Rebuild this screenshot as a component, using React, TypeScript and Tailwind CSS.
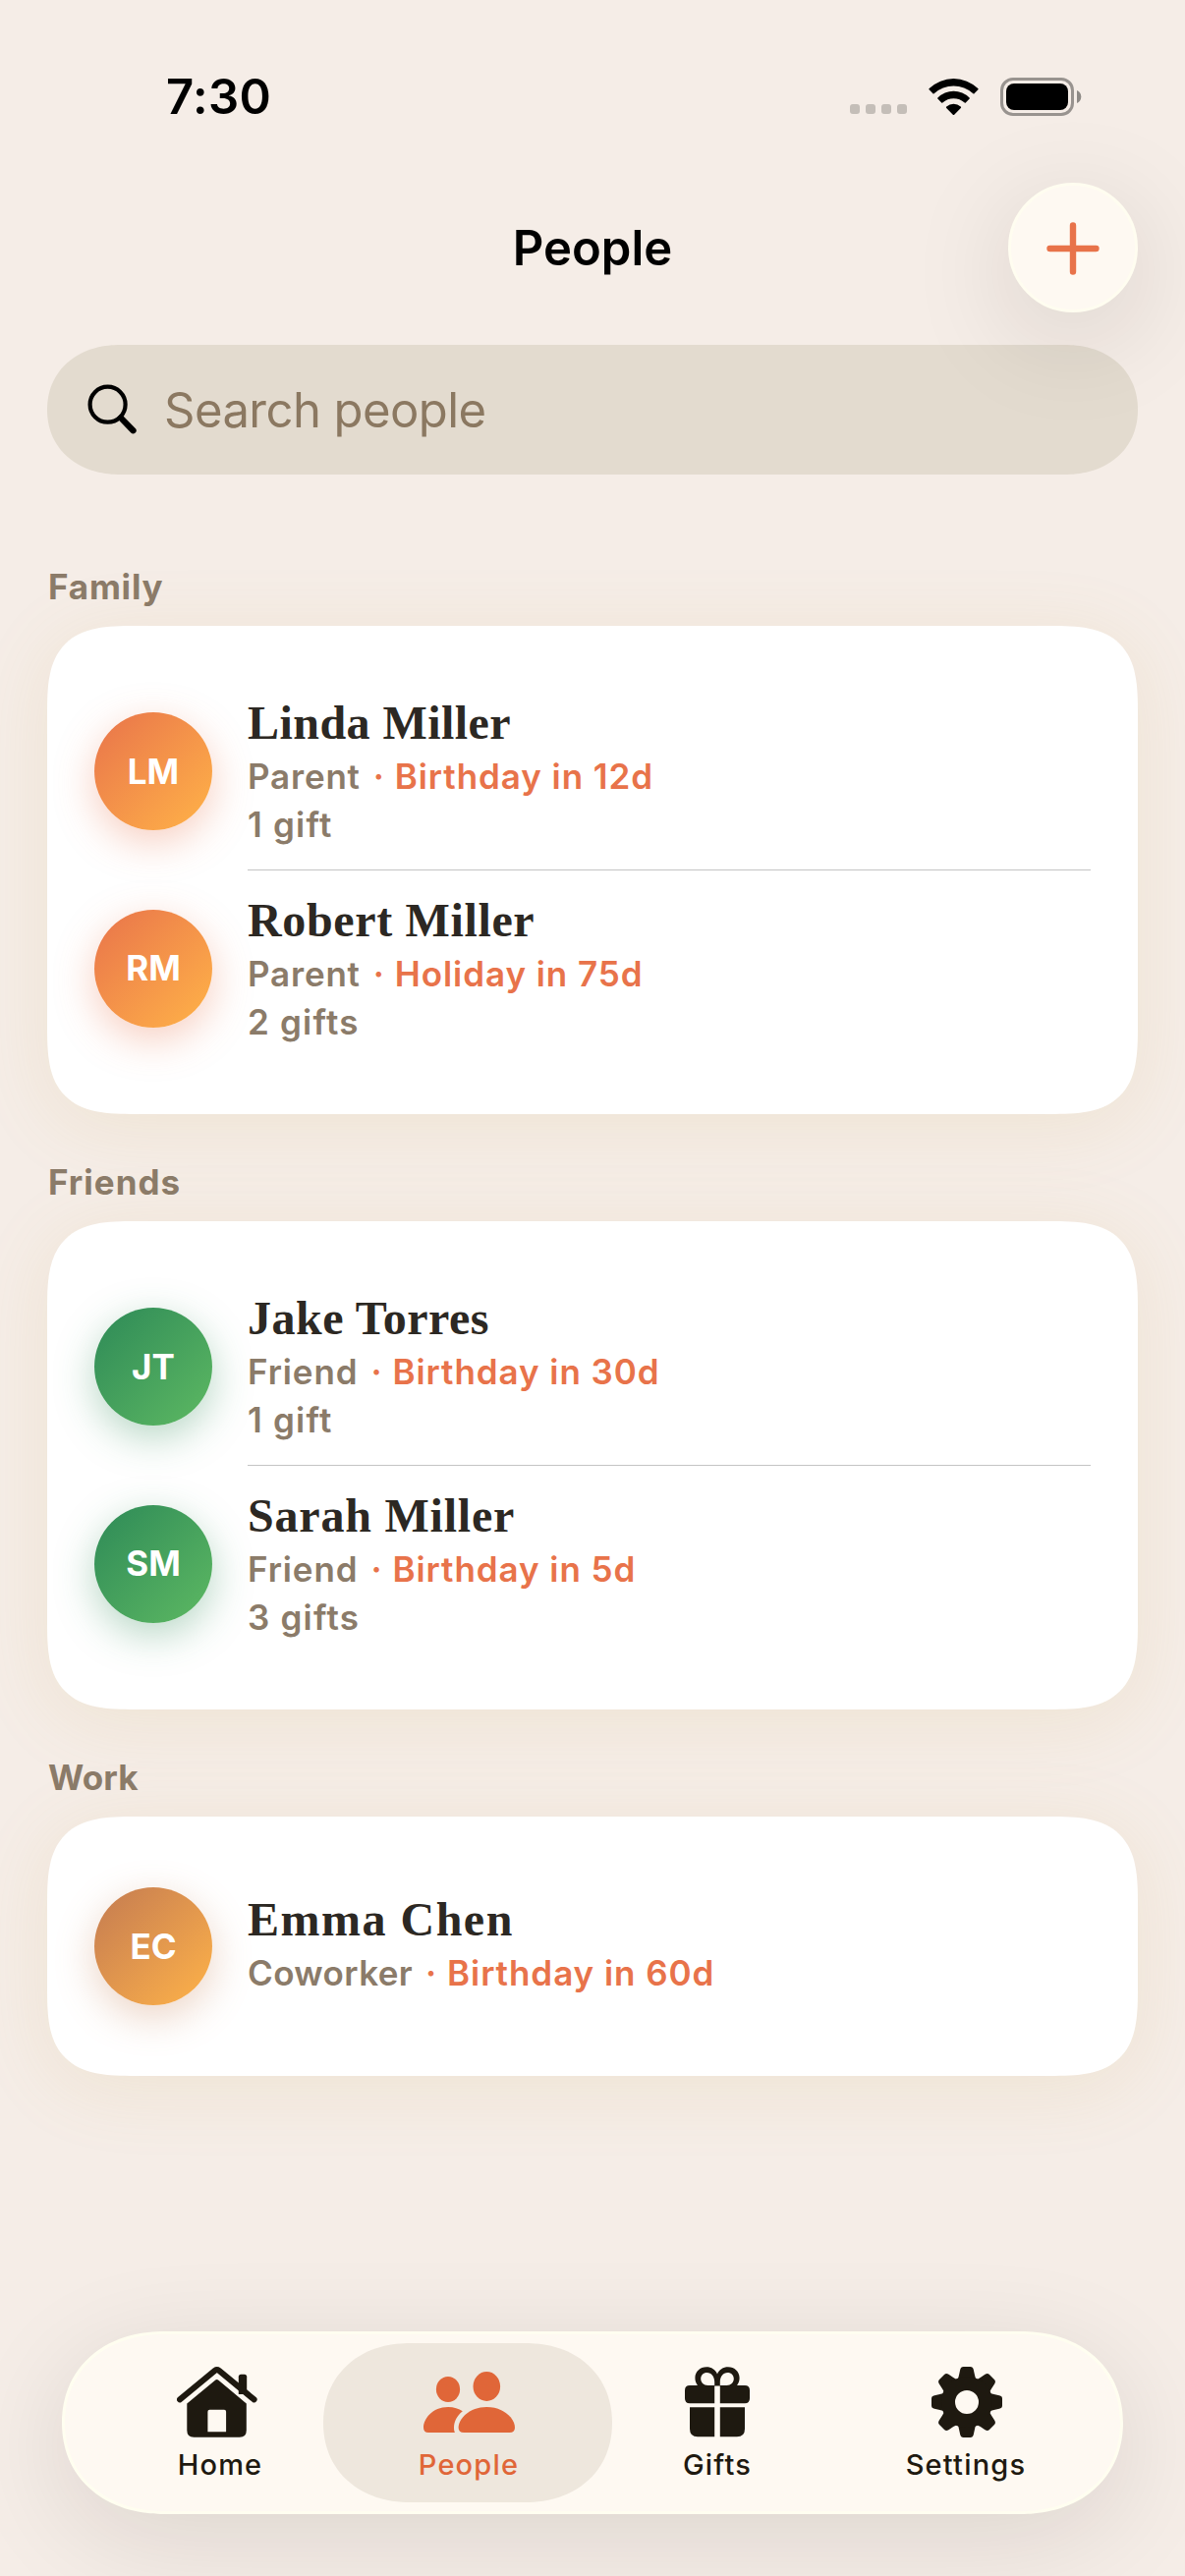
import type { ReactNode } from "react";

type Person = {
  initials: string;
  name: string;
  nameTracking: string;
  relation: string;
  relationTracking: string;
  event: string;
  gifts?: string;
};

type Group = {
  label: string;
  labelTracking: string;
  avatar: string;
  people: Person[];
};

const groups: Group[] = [
  {
    label: "Family",
    labelTracking: "tracking-[0.8px]",
    avatar: "from-[#E8734A] to-[#FFB347] shadow-[0_12px_40px_rgba(232,115,74,0.35)]",
    people: [
      {
        initials: "LM",
        name: "Linda Miller",
        nameTracking: "tracking-[0.45px]",
        relation: "Parent",
        relationTracking: "tracking-[0.8px]",
        event: "Birthday in 12d",
        gifts: "1 gift",
      },
      {
        initials: "RM",
        name: "Robert Miller",
        nameTracking: "tracking-[0.65px]",
        relation: "Parent",
        relationTracking: "tracking-[0.8px]",
        event: "Holiday in 75d",
        gifts: "2 gifts",
      },
    ],
  },
  {
    label: "Friends",
    labelTracking: "tracking-[1px]",
    avatar: "from-[#2D8A57] to-[#5DB962] shadow-[0_12px_40px_rgba(45,138,87,0.35)]",
    people: [
      {
        initials: "JT",
        name: "Jake Torres",
        nameTracking: "tracking-[0.5px]",
        relation: "Friend",
        relationTracking: "tracking-[0.9px]",
        event: "Birthday in 30d",
        gifts: "1 gift",
      },
      {
        initials: "SM",
        name: "Sarah Miller",
        nameTracking: "tracking-[0.8px]",
        relation: "Friend",
        relationTracking: "tracking-[0.9px]",
        event: "Birthday in 5d",
        gifts: "3 gifts",
      },
    ],
  },
  {
    label: "Work",
    labelTracking: "tracking-[0.1px]",
    avatar: "from-[#C47B50] to-[#FFB347] shadow-[0_12px_40px_rgba(196,123,80,0.33)]",
    people: [
      {
        initials: "EC",
        name: "Emma Chen",
        nameTracking: "tracking-[1.5px]",
        relation: "Coworker",
        relationTracking: "tracking-[0.4px]",
        event: "Birthday in 60d",
      },
    ],
  },
];

function StatusBar() {
  return (
    <div className="flex h-[186px] shrink-0 items-start justify-between pt-[72px] pl-[169px] pr-[105px]">
      <span className="text-[49px] leading-[53px] font-semibold tracking-[0.4px]">7:30</span>
      <div className="flex h-[52px] items-center">
        <div className="mt-[26px] mr-[22px] flex gap-[6px]">
          <i className="size-[10px] rounded-[3px] bg-[#C4BEB8]" />
          <i className="size-[10px] rounded-[3px] bg-[#C4BEB8]" />
          <i className="size-[10px] rounded-[3px] bg-[#C4BEB8]" />
          <i className="size-[10px] rounded-[3px] bg-[#C4BEB8]" />
        </div>
        <svg className="mr-[22px]" width="51" height="37" viewBox="0 0 51 37">
          <path d="M0.600 11.300Q0.100 10.700 0.700 10.100A35.700 35.700 0 0 1 50.300 10.100Q50.900 10.700 50.400 11.300L46.500 15.300Q46 15.800 45.400 15.200A29.500 29.500 0 0 0 5.600 15.200Q5 15.800 4.500 15.300Z" />
          <path d="M9.300 20.500Q8.800 20 9.400 19.400A22.700 22.700 0 0 1 41.600 19.400Q42.200 20 41.700 20.500L37.800 24.600Q37.300 25 36.700 24.500A16.800 16.800 0 0 0 14.300 24.500Q13.700 25 13.200 24.600Z" />
          <path d="M18.200 30Q17.500 29.300 18.300 28.600A10.600 10.600 0 0 1 32.700 28.600Q33.500 29.300 32.800 30L26.200 36.700Q25.500 37.300 24.800 36.700Z" />
        </svg>
        <div className="flex h-[39px] w-[75px] rounded-[13px] border-[3px] border-[#98938F] p-[3px]">
          <div className="flex-1 rounded-[8px] bg-black" />
        </div>
        <svg className="ml-[3px]" width="5" height="13" viewBox="0 0 5 13" fill="#8E8A86">
          <path d="M0 0C2.600 1 4.300 3.400 4.300 6.500S2.600 12 0 13Z" />
        </svg>
      </div>
    </div>
  );
}

function Header() {
  return (
    <div className="flex h-[132px] shrink-0 items-center justify-between">
      <div className="w-[132px]" />
      <h1 className="mt-[2px] text-[49px] leading-[60px] font-semibold">People</h1>
      <button className="relative z-10 flex size-[132px] items-center justify-center rounded-full border-[3px] border-[#FFFDF0] bg-[#FEF9F2] pt-px shadow-[0_24px_108px_rgba(30,22,10,0.13)]">
        <svg width="54" height="54" viewBox="0 0 54 54" fill="none" stroke="#E8734A" strokeWidth="6.400" strokeLinecap="round">
          <path d="M27 3.500V50.500M3.500 27H50.500" />
        </svg>
      </button>
    </div>
  );
}

function SearchField() {
  return (
    <div className="mt-[33px] flex h-[132px] shrink-0 items-center rounded-[74px/66px] bg-[#E3DBCF] pl-[41px] [corner-shape:superellipse(1.1)]">
      <svg width="51" height="51" viewBox="0 0 51 51" fill="none" stroke="#000" className="-mt-[1px]">
        <circle cx="20.600" cy="20.700" r="18" strokeWidth="4.200" />
        <path d="M34 34.400L46.500 47.200" strokeWidth="6.300" strokeLinecap="round" />
      </svg>
      <span className="mt-[2px] ml-[27px] text-[49px] leading-[60px] tracking-[-0.55px] text-[#8B7861]">Search people</span>
    </div>
  );
}

function PersonRow({ person, avatar, divided }: { person: Person; avatar: string; divided: boolean }) {
  return (
    <div className="flex min-h-[168px] items-center gap-9">
      <div
        className={`flex size-[120px] shrink-0 items-center justify-center rounded-full bg-linear-135 text-[35px] font-bold text-white ${avatar}`}
      >
        {person.initials}
      </div>
      <div className={`flex-1 py-6 text-[35px] font-semibold ${divided ? "border-t border-[#C4C4C4]" : ""}`}>
        <div
          className={`font-['Liberation_Serif',serif] text-[48px] leading-[54px] font-bold text-[#2C2823] ${person.nameTracking}`}
        >
          {person.name}
        </div>
        <div className="flex gap-[13px] leading-[54px] text-[#8B7B69]">
          <span className={person.relationTracking}>{person.relation}</span>
          <span className="tracking-[0.95px] text-[#E8734A]">· {person.event}</span>
        </div>
        {person.gifts && <div className="leading-[44px] tracking-[1.2px] text-[#8B7B69]">{person.gifts}</div>}
      </div>
    </div>
  );
}

function GroupSection({ group }: { group: Group }) {
  return (
    <section className="flex flex-col gap-[19px]">
      <h2 className={`pl-px text-[35px] leading-[42px] font-bold text-[#8B7B69] ${group.labelTracking}`}>{group.label}</h2>
      <div className="rounded-[90px] bg-white p-12 shadow-[0_12px_76px_rgba(200,160,74,0.13)] [corner-shape:superellipse(1.6)]">
        {group.people.map((person, i) => (
          <PersonRow key={person.name} person={person} avatar={group.avatar} divided={i > 0} />
        ))}
      </div>
    </section>
  );
}

function HomeIcon() {
  return (
    <svg className="-ml-[5px]" width="82" height="72" viewBox="0 0 82 72" fill="#1E1910">
      <path d="M62.800 28V10.200Q62.800 7.700 65.300 7.700H68.700Q71.200 7.700 71.200 10.200V28Z" />
      <path d="M3 33.400L38.700 3.900Q40.800 2.300 42.900 3.900L78.600 33.400" fill="none" stroke="#1E1910" strokeWidth="6" strokeLinecap="round" />
      <path
        fillRule="evenodd"
        d="M39 13.700Q40.700 12.400 42.400 13.700L70.800 37.500V64.700Q70.800 71.700 63.800 71.700H17.300Q10.300 71.700 10.300 64.700V37.500ZM33.400 43.700Q31.400 43.700 31.400 45.700V66.300H50.100V45.700Q50.100 43.700 48.100 43.700Z"
      />
    </svg>
  );
}

function PeopleIcon() {
  return (
    <svg className="ml-[2px]" width="93" height="72" viewBox="0 -5 93 72" fill="#E06638">
      <ellipse cx="25" cy="18" rx="12.100" ry="13" />
      <ellipse cx="64.300" cy="15" rx="13.800" ry="15" />
      <path d="M35.600 57C35.600 48 46.500 36 64.300 36S93 48 93 57Q93 62 87.500 62H41.100Q35.600 62 35.600 57Z" />
      <path d="M0 57C0 48 9 36 25 36C31 36 36 37.600 39.800 40.300C34 45 31 51 31 57C31 59 31.300 60.500 31.900 62H5Q0 62 0 57Z" />
    </svg>
  );
}

function GiftIcon() {
  return (
    <svg className="ml-[1px]" width="66" height="72" viewBox="0 0 66 72" fill="#1E1910">
      <path
        fillRule="evenodd"
        d="M13.200 19.500C11.500 17 10.400 14.500 10.400 11.500C10.400 5 15.500 .3 22 .3C27 .3 31.200 3 33 7.500C34.800 3 39 .3 44 .3C50.500 .3 55.600 5 55.600 11.500C55.600 14.500 54.500 17 52.800 19.500ZM30.200 19H23.500C19 19 16.200 16 16.200 12.300C16.200 8.500 18.800 6 22.500 6C27 6 30.200 10 30.200 15.500ZM35.800 19H42.500C47 19 49.800 16 49.800 12.300C49.800 8.500 47.200 6 43.500 6C39 6 35.800 10 35.800 15.500Z"
      />
      <path d="M5 19H30.200V37.300H5Q0 37.300 0 32.300V24Q0 19 5 19ZM35.800 19H61Q66 19 66 24V32.300Q66 37.300 61 37.300H35.800Z" />
      <path d="M5 41.300H30.200V71.300H13Q5 71.300 5 63.300ZM35.800 41.300H61V63.300Q61 71.300 53 71.300H35.800Z" />
    </svg>
  );
}

function GearIcon() {
  const teeth = [0, 45, 90, 135, 180, 225, 270, 315];
  return (
    <svg className="ml-[3px]" width="72" height="72" viewBox="0 0 72 72" fill="#1E1910">
      {teeth.map((angle) => (
        <path
          key={angle}
          transform={`rotate(${angle} 36 36)`}
          d="M26 14Q27.500 11.500 28 8.500L29.200 3Q29.800 0 32.500 0H39.500Q42.200 0 42.800 3L44 8.500Q44.500 11.500 46 14Z"
        />
      ))}
      <circle cx="36" cy="36" r="19" fill="none" stroke="#1E1910" strokeWidth="14" />
    </svg>
  );
}

function Tab({ icon, label, active = false }: { icon: ReactNode; label: string; active?: boolean }) {
  return (
    <div
      className={`flex h-[162px] shrink-0 flex-col items-center pt-6 ${
        active
          ? "-mx-[20.5px] w-[294px] rounded-[88px/81px] bg-[#EEE7DD] text-[#E06638] [corner-shape:superellipse(1.1)]"
          : "w-[253px] text-[#1E1910]"
      }`}
    >
      {icon}
      <span className="mt-[10px] ml-[2px] text-[29px] leading-[36px] font-medium tracking-[1.2px]">{label}</span>
    </div>
  );
}

function TabBar() {
  return (
    <nav className="mx-[15px] mt-auto mb-[63px] flex h-[186px] shrink-0 items-center justify-center rounded-[104px/93px] border-[3px] border-[#FFFEF0] bg-[#FEF9F2] pr-[1px] shadow-[0_24px_108px_rgba(30,22,10,0.11)] [corner-shape:superellipse(1.1)]">
      <Tab icon={<HomeIcon />} label="Home" />
      <Tab icon={<PeopleIcon />} label="People" active />
      <Tab icon={<GiftIcon />} label="Gifts" />
      <Tab icon={<GearIcon />} label="Settings" />
    </nav>
  );
}

export default function App() {
  return (
    <main className="flex h-[2622px] w-[1206px] flex-col overflow-hidden bg-[#F5EDE7] font-['Inter',sans-serif] text-black">
      <StatusBar />
      <div className="flex flex-1 flex-col px-12">
        <Header />
        <SearchField />
        <div className="mt-[93px] flex flex-col gap-12">
          {groups.map((group) => (
            <GroupSection key={group.label} group={group} />
          ))}
        </div>
        <TabBar />
      </div>
    </main>
  );
}
